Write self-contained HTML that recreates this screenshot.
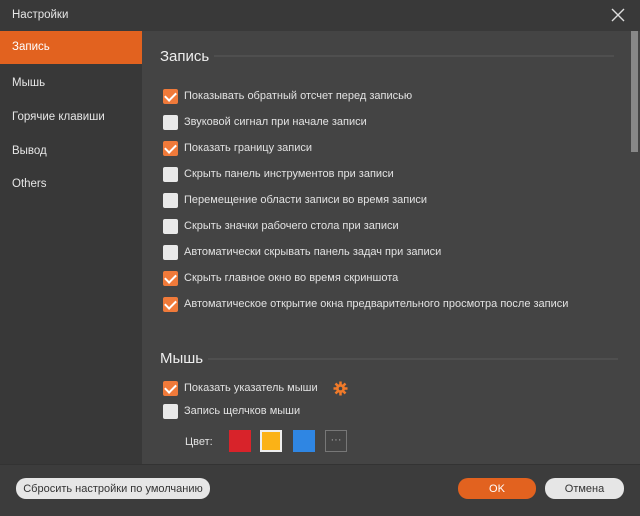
<!DOCTYPE html>
<html><head><meta charset="utf-8"><style>
*{margin:0;padding:0;box-sizing:border-box}
body{width:640px;height:516px;background:#444;font-family:"Liberation Sans","DejaVu Sans",sans-serif;color:#ddd;position:relative;overflow:hidden;font-size:12px}
.title{position:absolute;left:0;top:0;width:640px;height:31px;background:#393939;}
.title span{position:absolute;left:12px;top:9px;font-size:11.5px;color:#e6e6e6}
.side{position:absolute;left:0;top:31px;width:142px;height:434px;background:#383838}
.side div{position:absolute;left:12px;font-size:11.5px;color:#e6e6e6}
.sel{position:absolute;left:0;top:31px;width:142px;height:33px;background:#e2621f}
.h{position:absolute;left:160px;font-size:15px;color:#eee}
.line{position:absolute;height:2px;background:#4f4f4f}
.cb{position:absolute;left:163px;width:15px;height:15px;border-radius:2px;background:#e9e9e9}
.cb.on{background:#f07a3a}
.cb.on::after{content:"";position:absolute;left:4px;top:1px;width:5px;height:9px;border:solid #fff;border-width:0 2px 2px 0;transform:rotate(45deg)}
.t{position:absolute;left:184px;font-size:11px;color:#e2e2e2}
.sw{position:absolute;top:430px;width:22px;height:22px}
.bottom{position:absolute;left:0;top:464px;width:640px;height:52px;background:#3c3c3c;border-top:1px solid #333}
.btn{position:absolute;top:478px;height:21px;border-radius:10px;font-size:11px;text-align:center;line-height:22px}
</style></head><body>
<div class="title"><span>Настройки</span>
<svg style="position:absolute;left:611px;top:8px" width="14" height="14"><path d="M1 1L13 13M13 1L1 13" stroke="#ddd" stroke-width="1.4"/></svg></div>
<div class="side">
<div style="top:46px">Мышь</div><div style="top:80px">Горячие клавиши</div><div style="top:114px">Вывод</div><div style="top:147px">Others</div></div>
<div class="sel"><span style="position:absolute;left:12px;top:10px;color:#fff;font-size:11.5px">Запись</span></div>
<div style="position:absolute;left:631px;top:31px;width:7px;height:121px;background:#888"></div>
<div class="h" style="top:48px">Запись</div><div class="line" style="left:214px;top:55px;width:400px"></div>
<div class="cb on" style="top:89px"></div><div class="t" style="top:90px">Показывать обратный отсчет перед записью</div>
<div class="cb" style="top:115px"></div><div class="t" style="top:116px">Звуковой сигнал при начале записи</div>
<div class="cb on" style="top:141px"></div><div class="t" style="top:142px">Показать границу записи</div>
<div class="cb" style="top:167px"></div><div class="t" style="top:168px">Скрыть панель инструментов при записи</div>
<div class="cb" style="top:193px"></div><div class="t" style="top:194px">Перемещение области записи во время записи</div>
<div class="cb" style="top:219px"></div><div class="t" style="top:220px">Скрыть значки рабочего стола при записи</div>
<div class="cb" style="top:245px"></div><div class="t" style="top:246px">Автоматически скрывать панель задач при записи</div>
<div class="cb on" style="top:271px"></div><div class="t" style="top:272px">Скрыть главное окно во время скриншота</div>
<div class="cb on" style="top:297px"></div><div class="t" style="top:298px">Автоматическое открытие окна предварительного просмотра после записи</div>
<div class="h" style="top:350px">Мышь</div><div class="line" style="left:208px;top:358px;width:410px"></div>
<div class="cb on" style="top:381px"></div><div class="t" style="top:382px">Показать указатель мыши</div>
<svg style="position:absolute;left:333px;top:381px" width="15" height="15" viewBox="0 0 15 15"><g stroke="#f07a2a" stroke-width="2.5"><path d="M7.5 0.5v14M0.5 7.5h14M2.5 2.5l10 10M12.5 2.5l-10 10"/></g><circle cx="7.5" cy="7.5" r="4.5" fill="#f07a2a"/><circle cx="7.5" cy="7.5" r="1.8" fill="#444"/></svg>
<div class="cb" style="top:404px"></div><div class="t" style="top:405px">Запись щелчков мыши</div>
<div class="t" style="top:436px;left:185px">Цвет:</div>
<div class="sw" style="left:229px;background:#d8232a"></div>
<div class="sw" style="left:260px;background:#fbb216;border:2px solid #eee"></div>
<div class="sw" style="left:293px;background:#2f86e3"></div>
<div class="sw" style="left:325px;border:1px solid #777;color:#aaa;text-align:center;line-height:18px;font-size:11px">···</div>
<div class="bottom"></div>
<div class="btn" style="left:16px;width:194px;background:#e6e6e6;color:#333">Сбросить настройки по умолчанию</div>
<div class="btn" style="left:458px;width:78px;background:#e2621f;color:#fff">OK</div>
<div class="btn" style="left:545px;width:79px;background:#e6e6e6;color:#333">Отмена</div>
</body></html>
